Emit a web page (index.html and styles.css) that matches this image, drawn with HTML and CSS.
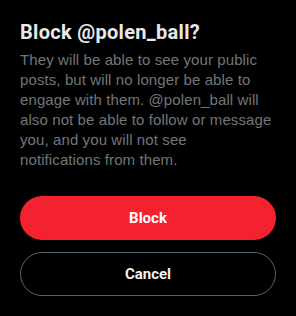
FILE: index.html
```html
<!DOCTYPE html>
<html>
<head>
<meta charset="utf-8">
<link rel="stylesheet" href="styles.css">
</head>
<body>
<div class="dialog">
  <h1 class="title">Block @polen_ball?</h1>
  <p class="desc">They will be able to see your public posts, but will no longer be able to engage with them. @polen_ball will also not be able to follow or message you, and you will not see<br>notifications from them.</p>
  <div class="actions">
    <button class="btn btn-block">Block</button>
    <button class="btn btn-cancel">Cancel</button>
  </div>
</div>
</body>
</html>
```
FILE: styles.css
```css
html, body {
  margin: 0;
  background: #000;
}
body {
  font-family: "Liberation Sans", Arial, sans-serif;
}
.dialog {
  width: 296px;
  height: 316px;
  box-sizing: border-box;
  padding: 20px 20px;
  display: flex;
  flex-direction: column;
}
.title {
  margin: 0;
  font-family: Roboto, "Liberation Sans", sans-serif;
  font-size: 20px;
  line-height: 24px;
  font-weight: 700;
  letter-spacing: 0.3px;
  color: #e7e9ea;
}
.desc {
  margin: 6px 0 0;
  font-size: 15px;
  line-height: 20px;
  letter-spacing: 0.1px;
  color: #71767b;
}
.actions {
  margin-top: 26px;
  display: flex;
  flex-direction: column;
  gap: 12px;
}
.btn {
  height: 44px;
  width: 100%;
  border-radius: 22px;
  font-family: Roboto, "Liberation Sans", sans-serif;
  font-size: 15px;
  font-weight: 700;
  cursor: pointer;
  box-sizing: border-box;
}
.btn-block {
  background: #f4212e;
  border: none;
  color: #fff;
}
.btn-cancel {
  background: transparent;
  border: 1px solid #536471;
  color: #eff3f4;
}
```
